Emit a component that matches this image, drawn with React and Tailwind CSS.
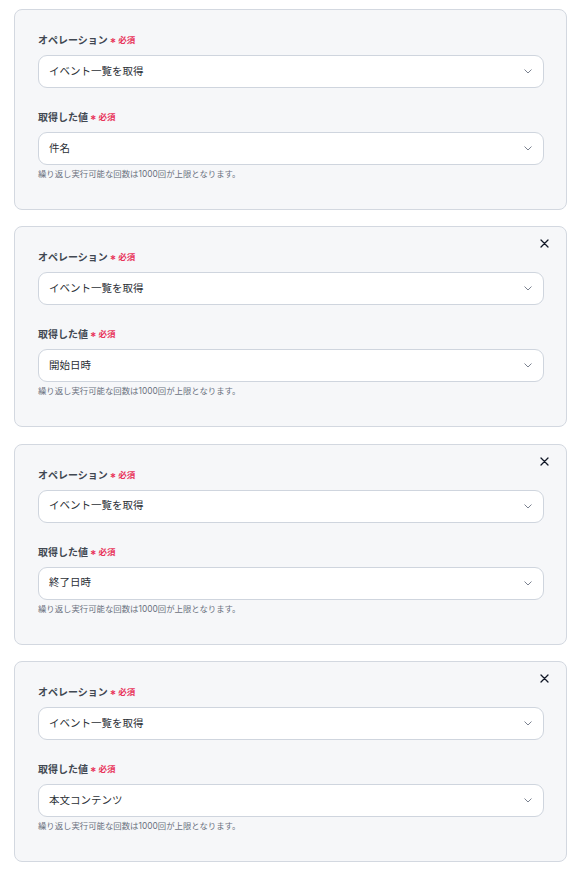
import React from 'react';

const font = { fontFamily: '"Inter", "Noto Sans CJK JP", sans-serif' };

const Chevron = () => (
  <svg width="8" height="5" viewBox="0 0 8 5" fill="none" className="shrink-0 mr-[1px]">
    <path d="M0.8 0.8l3.2 3.2 3.2-3.2" stroke="#7b8290" strokeWidth="1" strokeLinecap="round" strokeLinejoin="round" />
  </svg>
);

const CloseIcon = () => (
  <svg width="9" height="9" viewBox="0 0 9 9" fill="none">
    <path d="M1 1l7 7M8 1L1 8" stroke="#111827" strokeWidth="1.3" strokeLinecap="round" />
  </svg>
);

const Label = ({ children }) => (
  <div className="flex items-end h-[14px] leading-[14px]">
    <span className="text-[10px] font-semibold text-[#414852]">{children}</span>
    <span className="text-[12px] font-semibold text-[#e8335a] ml-[2px] leading-[12px] translate-y-[2px]">*</span>
    <span className="text-[8.5px] font-semibold text-[#e8335a] ml-[2px]">必須</span>
  </div>
);

const Select = ({ value }) => (
  <div className="mt-[8px] h-[33px] flex items-center justify-between bg-white border border-[#cfd5de] rounded-[9px] pl-[10px] pr-[10px]">
    <span className="text-[10.5px] text-[#2b2f36]">{value}</span>
    <Chevron />
  </div>
);

const Card = ({ value, closable }) => (
  <div className="relative h-[201px] bg-[#f6f7f9] border border-[#d3d8e0] rounded-[8px] pt-[23px] pl-[23px] pr-[22px]">
    {closable && (
      <button className="absolute top-[12px] right-[17px] leading-none">
        <CloseIcon />
      </button>
    )}
    <Label>オペレーション</Label>
    <Select value="イベント一覧を取得" />
    <div className="mt-[22px]">
      <Label>取得した値</Label>
    </div>
    <Select value={value} />
    <p className="mt-[3px] text-[8.4px] leading-[12px] text-[#6b7280]">
      繰り返し実行可能な回数は1000回が上限となります。
    </p>
  </div>
);

export default function App() {
  const items = ['件名', '開始日時', '終了日時', '本文コンテンツ'];
  return (
    <div className="min-h-[870px] bg-white pt-[9px] pl-[14px] pr-[9px]" style={font}>
      <div className="flex flex-col gap-[16.3px]">
        {items.map((v, i) => (
          <Card key={v} value={v} closable={i > 0} />
        ))}
      </div>
    </div>
  );
}
